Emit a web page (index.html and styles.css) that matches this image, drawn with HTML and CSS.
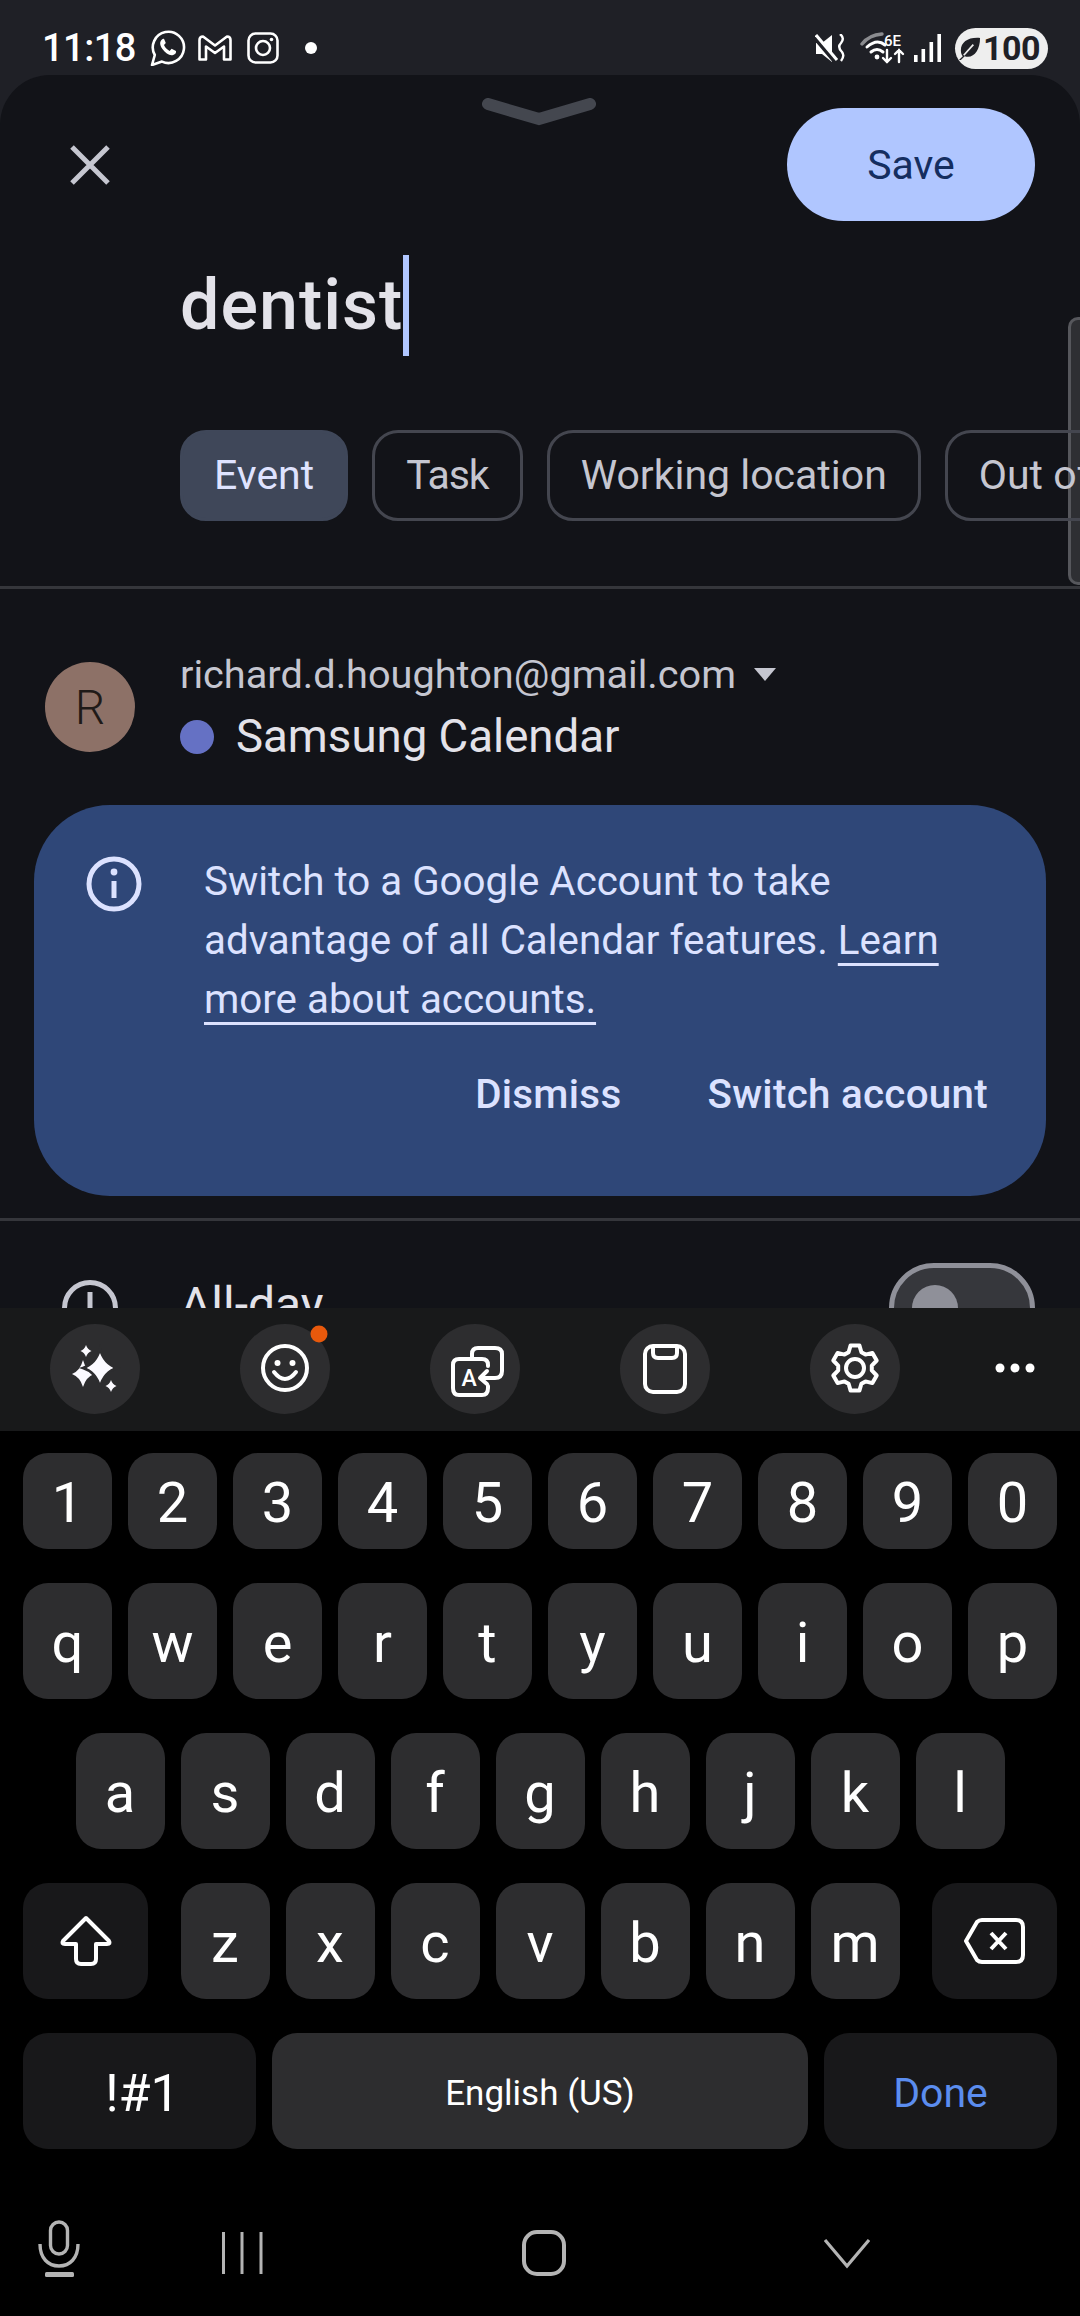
FILE: index.html
```html
<!DOCTYPE html>
<html lang="en">
<head>
	<meta charset="UTF-8">
	<title>New event</title>
	<link rel="stylesheet" href="styles.css">
</head>
<body>
	<div class="phone">
		<!-- status bar -->
		<div class="status">
			<span class="time">11:18</span>
			<svg class="st_whatsapp" viewBox="0 0 36 36" fill="none" stroke="#fff" stroke-width="2.6" stroke-linejoin="round"><path d="M2 35 L4.8 25 A15.6 15.6 0 1 1 12 31.6 Z"/><path fill="#fff" stroke="none" d="M12 9.5 c-2.4 1.8 -2.6 5.2 .4 9.6 c3.2 4.6 7.4 6.8 10.8 5.8 c2.2 -.7 3.2 -2.2 2.8 -4 l-4.4 -2.2 -2 2.2 c-2.4 -1 -4.4 -3 -5.6 -5.8 l1.8 -2 -1.6 -3.8 c-.6 -.6 -1.4 -.6 -2.2 .2z"/></svg>
			<svg class="st_gmail" viewBox="0 0 34 26" fill="none" stroke="#fff" stroke-width="2.6" stroke-linejoin="round"><path d="M1.5 5 Q1.5 1.5 5 1.5 L17 10.5 L29 1.5 Q32.5 1.5 32.5 5 V24.5 H26 V11.5 L17 18 L8 11.5 V24.5 H1.5 Z"/></svg>
			<svg class="st_insta" viewBox="0 0 32 32" fill="none" stroke="#fff" stroke-width="2.6"><rect x="1.5" y="1.5" width="29" height="29" rx="7"/><circle cx="16" cy="16" r="7"/><circle cx="24.5" cy="7.5" r="1.8" fill="#fff" stroke="none"/></svg>
			<span class="st_dot"></span>
			<div class="status_right">
				<svg class="st_mute" viewBox="0 0 30 28" fill="none"><path fill="#fff" d="M1 9 H7 L17 1 V28 L7 20 H1Z"/><path stroke="#1f2026" stroke-width="4" d="M-1 3 L21 29"/><path stroke="#fff" stroke-width="3" d="M1 1 L22 26"/><path stroke="#fff" stroke-width="2.4" d="M25 0 Q30 4 26 9 Q22 13 27 18 Q30 22 26 27"/></svg>
				<svg class="st_wifi" viewBox="0 0 46 33" fill="none" stroke="#fff" stroke-linecap="round"><path stroke="#8a8b8f" stroke-width="3.4" d="M2 12 Q9 3 22 2"/><path stroke-width="3" d="M7 15 Q17 6 25 13"/><path stroke-width="3" d="M11 20 Q17 15 23 20"/><circle cx="17" cy="25" r="2.4" fill="#fff" stroke="none"/><text class="st_6e" x="24" y="14">6E</text><path stroke-width="2.4" d="M27 18 V30 M23 26 L27 30 L31 26"/><path stroke-width="2.4" d="M39 30 V18 M35 22 L39 18 L43 22"/></svg>
				<svg class="st_signal" viewBox="0 0 27 28" fill="#fff"><rect x="0" y="21" width="3.6" height="7"/><rect x="7.5" y="15" width="3.6" height="13"/><rect x="15.5" y="8" width="3.6" height="20"/><rect x="23.4" y="0" width="3.6" height="28"/></svg>
				<div class="battery">
					<svg class="leaf" viewBox="0 0 24 24"><path fill="#1f2026" d="M23 1 C11 0 3 5 3 14 C3 17 4 19 5 20 L1 24 L3 24 L7 20 C16 23 23 14 23 1Z"/><path fill="none" stroke="#eee" stroke-width="1.8" d="M6 19 L16 8"/></svg>
					<span>100</span>
				</div>
			</div>
		</div>

		<!-- event sheet -->
		<div class="sheet">
			<svg class="handle" viewBox="0 0 114 28" fill="none"><path stroke="#44474f" stroke-width="12" stroke-linecap="round" d="M6 6 L57 21 L108 6"/></svg>
			<div class="sheet_head">
				<svg class="close" viewBox="0 0 40 40" fill="none"><path stroke="#c5c6d0" stroke-width="5" d="M2 2 L38 38 M38 2 L2 38"/></svg>
				<a class="save">Save</a>
			</div>
			<div class="title_row"><span class="title">dentist</span><span class="caret"></span></div>
			<div class="chips">
				<span class="chip chip_on">Event</span>
				<span class="chip chip_task">Task</span>
				<span class="chip">Working location</span>
				<span class="chip">Out of office</span>
			</div>
			<div class="scroll_edge"></div>
			<div class="line"></div>
			<div class="account">
				<div class="avatar">R</div>
				<div class="account_text">
					<div class="email">richard.d.houghton@gmail.com<span class="tri"></span></div>
					<div class="cal"><span class="cal_dot"></span>Samsung Calendar</div>
				</div>
			</div>
			<div class="banner">
				<div class="banner_top">
					<svg class="info" viewBox="0 0 56 56" fill="none" stroke="#dce2ff" stroke-width="5"><circle cx="28" cy="28" r="25"/><path d="M28 25 V42"/><circle cx="28" cy="16" r="3.4" fill="#dce2ff" stroke="none"/></svg>
					<p class="banner_text">Switch to a Google Account to take<br>advantage of all Calendar features. <u>Learn<br>more about accounts.</u></p>
				</div>
				<div class="banner_btns"><span>Dismiss</span><span>Switch account</span></div>
			</div>
			<div class="line line_b"></div>
			<div class="allday">
				<svg class="clock" viewBox="0 0 56 56" fill="none" stroke="#c5c6d0" stroke-width="5"><circle cx="28" cy="28" r="25.5"/><path d="M28 12 V30"/></svg>
				<span class="allday_text">All-day</span>
				<div class="switch"><span class="thumb"></span></div>
			</div>
		</div>

		<!-- keyboard -->
		<div class="keyboard">
			<div class="tools">
				<span class="tool"><svg viewBox="0 0 90 90" fill="#fbfaff"><path d="M33 36 Q36 47 44 50 Q36 53 33 63 Q30 53 22 50 Q30 47 33 36Z"/><path stroke="#2d2d2f" stroke-width="2.5" d="M50 25 Q54 40 67 44 Q54 48 50 63 Q46 48 33 44 Q46 40 50 25Z"/><path d="M36 21 Q37.5 25.5 41.5 27 Q37.5 28.5 36 33 Q34.5 28.5 30.5 27 Q34.5 25.5 36 21Z"/><path d="M61 56 Q62.5 60.5 66.5 62 Q62.5 63.5 61 68 Q59.5 63.5 55.5 62 Q59.5 60.5 61 56Z"/></svg></span>
				<span class="tool"><svg viewBox="0 0 90 90" fill="none" stroke="#fff" stroke-width="4"><circle cx="45" cy="44" r="22"/><circle cx="37.5" cy="39" r="3" fill="#fff" stroke="none"/><circle cx="52.5" cy="39" r="3" fill="#fff" stroke="none"/><path stroke-linecap="round" d="M34 48 Q45 62 56 48"/><circle cx="79" cy="10" r="8.5" fill="#e8590c" stroke="none"/></svg></span>
				<span class="tool"><svg viewBox="0 0 90 90" fill="none" stroke="#fff" stroke-width="4" stroke-linecap="round" stroke-linejoin="round"><path d="M42 34 V30 Q42 24 48 24 H65 Q72 24 72 30 V47 Q72 54 65 54 H52"/><path d="M57 47 L50 54 L57 60"/><path d="M58 42 V41 Q58 35 52 35 H29 Q23 35 23 41 V64 Q23 71 29 71 H52 Q58 71 58 64 V62"/><text class="tool_a" x="31.5" y="62">A</text></svg></span>
				<span class="tool"><svg viewBox="0 0 90 90" fill="none" stroke="#fff" stroke-width="4"><rect x="25" y="22" width="40" height="46" rx="8"/><path d="M33 22 V29 Q33 34 38 34 H52 Q57 34 57 29 V22"/></svg></span>
				<span class="tool"><svg viewBox="0 0 90 90" fill="none" stroke="#fff" stroke-width="4" stroke-linejoin="round"><path d="M40.6 21.4 L49.4 21.4 L51.4 28.2 L55.5 30.6 L62.4 28.9 L66.7 36.5 L61.8 41.6 L61.8 46.4 L66.7 51.5 L62.4 59.1 L55.5 57.4 L51.4 59.8 L49.4 66.6 L40.6 66.6 L38.6 59.8 L34.5 57.4 L27.6 59.1 L23.3 51.5 L28.2 46.4 L28.2 41.6 L23.3 36.5 L27.6 28.9 L34.5 30.6 L38.6 28.2 Z"/><circle cx="45" cy="44" r="9"/></svg></span>
				<svg class="more" viewBox="0 0 40 10" fill="#fff"><circle cx="5" cy="5" r="4.5"/><circle cx="20" cy="5" r="4.5"/><circle cx="35" cy="5" r="4.5"/></svg>
			</div>
			<div class="keys">
				<div class="row row_num">
					<span class="key">1</span><span class="key">2</span><span class="key">3</span><span class="key">4</span><span class="key">5</span><span class="key">6</span><span class="key">7</span><span class="key">8</span><span class="key">9</span><span class="key">0</span>
				</div>
				<div class="row">
					<span class="key">q</span><span class="key">w</span><span class="key">e</span><span class="key">r</span><span class="key">t</span><span class="key">y</span><span class="key">u</span><span class="key">i</span><span class="key">o</span><span class="key">p</span>
				</div>
				<div class="row row_mid">
					<span class="key">a</span><span class="key">s</span><span class="key">d</span><span class="key">f</span><span class="key">g</span><span class="key">h</span><span class="key">j</span><span class="key">k</span><span class="key">l</span>
				</div>
				<div class="row">
					<span class="key key_fn"><svg viewBox="0 0 125 116" fill="none"><path stroke="#fff" stroke-width="4" stroke-linejoin="round" d="M63 35 L40 58 Q38 61 42 61 H53 V76 Q53 81 58 81 H68 Q73 81 73 76 V61 H84 Q88 61 86 58 Z"/></svg></span>
					<div class="letters">
						<span class="key">z</span><span class="key">x</span><span class="key">c</span><span class="key">v</span><span class="key">b</span><span class="key">n</span><span class="key">m</span>
					</div>
					<span class="key key_fn"><svg viewBox="0 0 125 116" fill="none" stroke="#fff" stroke-width="4" stroke-linejoin="round"><path d="M34 58 L45 39 Q47 37 50 37 H84 Q91 37 91 44 V72 Q91 79 84 79 H50 Q47 79 45 77 Z"/><path d="M59 50 L74 66 M74 50 L59 66"/></svg></span>
				</div>
				<div class="row">
					<span class="key key_wide key_sym">!#1</span>
					<span class="key key_space">English (US)</span>
					<span class="key key_wide key_done">Done</span>
				</div>
			</div>
			<div class="nav">
				<svg class="nav_mic" viewBox="0 0 42 60" fill="none" stroke="#b4b4b4" stroke-width="3.4"><rect x="12.5" y="2" width="17" height="32" rx="8.5"/><path d="M2 24 C2 38 10 46 21 46 C32 46 40 38 40 24"/><rect x="7" y="52" width="29" height="5" rx="1.5" fill="#b4b4b4" stroke="none"/></svg>
				<svg class="nav_recent" viewBox="0 0 42 60" fill="none" stroke="#b4b4b4" stroke-width="3"><path d="M1.5 12 V54 M20 12 V54 M39 12 V54"/></svg>
				<svg class="nav_home" viewBox="0 0 46 60" fill="none" stroke="#b4b4b4" stroke-width="4"><rect x="3" y="12" width="40" height="42" rx="13"/></svg>
				<svg class="nav_back" viewBox="0 0 46 60" fill="none" stroke="#b4b4b4" stroke-width="3.2"><path d="M1 20 L23 46 L45 20"/></svg>
			</div>
		</div>
	</div>
</body>
</html>
```

FILE: styles.css
```css
*{
	margin: 0;
	padding: 0;
	box-sizing: border-box;
}
body{
	background: #000;
	font-family: Roboto, "Noto Sans", sans-serif;
}
svg{
	display: block;
	flex: none;
}
.phone{
	width: 1080px;
	height: 2316px;
	display: flex;
	flex-direction: column;
	overflow: hidden;
	background: #1f2026;
}

/* status bar */
.status{
	height: 75px;
	flex: none;
	padding: 21px 32px 0 42px;
	display: flex;
	align-items: center;
	color: #fff;
}
.time{
	font-size: 38px;
	font-weight: 500;
	letter-spacing: -0.5px;
	width: 89px;
	margin-right: 19px;
}
.st_whatsapp{
	width: 36px;
	height: 36px;
	margin-right: 12px;
}
.st_gmail{
	width: 34px;
	height: 26px;
	margin-right: 15px;
}
.st_insta{
	width: 32px;
	height: 32px;
	margin-right: 26px;
}
.st_dot{
	width: 12px;
	height: 12px;
	border-radius: 50%;
	background: #fff;
}
.status_right{
	margin-left: auto;
	display: flex;
	align-items: center;
}
.st_mute{
	width: 30px;
	height: 28px;
	margin-right: 15px;
}
.st_wifi{
	width: 46px;
	height: 33px;
	margin-right: 8px;
}
.st_6e{
	font-size: 15px;
	font-weight: 500;
	fill: #fff;
	stroke: none;
}
.st_signal{
	width: 27px;
	height: 28px;
	margin-right: 14px;
}
.battery{
	width: 93px;
	height: 41px;
	border-radius: 21px;
	background: #eee;
	display: flex;
	align-items: center;
	padding-left: 3px;
	color: #1f2026;
	font-size: 34px;
	font-weight: 700;
	letter-spacing: -0.5px;
}
.leaf{
	width: 23px;
	height: 23px;
	margin-right: 2px;
}

/* sheet */
.sheet{
	flex: 1;
	position: relative;
	overflow: hidden;
	background: #121318;
	border-radius: 50px 50px 0 0;
}
.handle{
	position: absolute;
	left: 482px;
	top: 23px;
	width: 114px;
	height: 28px;
}
.sheet_head{
	padding: 33px 45px 0 70px;
	display: flex;
	align-items: center;
	justify-content: space-between;
}
.close{
	width: 40px;
	height: 40px;
}
.save{
	width: 248px;
	height: 113px;
	border-radius: 57px;
	background: #b0c6ff;
	color: #152e60;
	font-size: 41px;
	display: flex;
	align-items: center;
	justify-content: center;
}
.title_row{
	margin-top: 34px;
	padding-left: 180px;
	height: 101px;
	display: flex;
}
.title{
	font-size: 70px;
	line-height: 101px;
	font-weight: 500;
	letter-spacing: 1px;
	color: #e3e2e9;
}
.caret{
	width: 6px;
	height: 101px;
	background: #b0c6ff;
}
.chips{
	position: relative;
	z-index: 1;
	margin-top: 74px;
	padding-left: 180px;
	display: flex;
	gap: 24px;
	overflow: hidden;
}
.chip{
	flex: none;
	height: 91px;
	padding: 0 31px;
	border: 3px solid #44464f;
	border-radius: 26px;
	color: #c5c6d0;
	font-size: 41px;
	line-height: 85px;
	white-space: nowrap;
}
.chip_on{
	background: #3f4759;
	border-color: #3f4759;
	color: #dfe3ff;
}
.chip_task{
	letter-spacing: -1px;
}
.scroll_edge{
	position: absolute;
	right: 0;
	top: 242px;
	width: 12px;
	height: 268px;
	background: #2e2f33;
	border: 3px solid #56575c;
	border-right: 0;
	border-radius: 10px 0 0 10px;
}
.line{
	margin-top: 65px;
	height: 3px;
	background: #35363b;
}
.account{
	margin-top: 57px;
	padding-left: 45px;
	display: flex;
	align-items: flex-start;
	gap: 45px;
}
.avatar{
	width: 90px;
	height: 90px;
	margin-top: 16px;
	border-radius: 50%;
	background: #8d7167;
	color: #1f1a18;
	font-size: 48px;
	font-weight: 300;
	display: flex;
	align-items: center;
	justify-content: center;
}
.email{
	color: #c5c6d0;
	font-size: 39.7px;
	line-height: 57px;
	display: flex;
	align-items: center;
}
.tri{
	margin-left: 18px;
	border-left: 11.5px solid transparent;
	border-right: 11.5px solid transparent;
	border-top: 13px solid #c5c6d0;
}
.cal{
	color: #e3e2e9;
	font-size: 45.6px;
	line-height: 68px;
	display: flex;
	align-items: center;
}
.cal_dot{
	width: 34px;
	height: 34px;
	border-radius: 50%;
	background: #6571c4;
	margin-right: 22px;
}
.banner{
	margin: 34px 34px 0;
	height: 391px;
	border-radius: 76px;
	background: #2f4778;
	color: #dce2ff;
	padding: 47px 58px 0 52px;
	font-size: 40.3px;
	line-height: 59px;
}
.banner_top{
	display: flex;
	align-items: flex-start;
	gap: 62px;
}
.info{
	width: 56px;
	height: 56px;
	margin-top: 4px;
}
.banner_text{
	white-space: nowrap;
}
.banner_text u{
	text-underline-offset: 9px;
	text-decoration-thickness: 3px;
}
.banner_btns{
	margin-top: 36px;
	display: flex;
	justify-content: flex-end;
	gap: 86px;
	font-weight: 500;
	letter-spacing: 0.3px;
}
.line_b{
	margin-top: 22px;
}
.allday{
	margin-top: 42px;
	padding: 0 45px 0 62px;
	height: 90px;
	display: flex;
	align-items: center;
}
.clock{
	width: 56px;
	height: 56px;
	margin-right: 62px;
}
.allday_text{
	color: #e3e2e9;
	font-size: 48px;
	margin-bottom: 8px;
}
.switch{
	margin-left: auto;
	width: 146px;
	height: 90px;
	border-radius: 45px;
	background: #36373c;
	border: 5px solid #8f9099;
	padding: 17px 0 0 18px;
}
.thumb{
	display: block;
	width: 46px;
	height: 46px;
	border-radius: 50%;
	background: #8f9099;
}

/* keyboard */
.keyboard{
	flex: none;
	height: 1008px;
	background: #000;
}
.tools{
	height: 123px;
	background: #18191a;
	padding: 16px 0 0 50px;
	display: flex;
	gap: 100px;
}
.tool{
	width: 90px;
	height: 90px;
	border-radius: 50%;
	background: #2d2d2f;
}
.tool_a{
	font-size: 23px;
	font-weight: 500;
	fill: #fff;
	stroke: none;
}
.more{
	width: 40px;
	height: 10px;
	margin: 39px 0 0 -5px;
}
.keys{
	padding: 22px 23px 0;
	display: flex;
	flex-direction: column;
	gap: 34px;
}
.row{
	display: flex;
	justify-content: space-between;
	height: 116px;
}
.row_num{
	height: 96px;
}
.row_mid{
	justify-content: center;
	gap: 16px;
}
.letters{
	display: flex;
	gap: 16px;
}
.key{
	width: 89px;
	border-radius: 25px;
	background: #2d2d2f;
	color: #fff;
	font-size: 56px;
	display: flex;
	align-items: center;
	justify-content: center;
	padding-top: 4px;
}
.key_fn{
	width: 125px;
	background: #18181a;
	padding: 0;
}
.key_wide{
	width: 233px;
	background: #18181a;
}
.key_sym{
	font-size: 52px;
	padding-left: 6px;
}
.key_space{
	width: 536px;
	font-size: 35px;
}
.key_done{
	font-size: 41px;
	color: #5b8def;
}
.nav{
	margin-top: 71px;
	padding-left: 38px;
	display: flex;
	gap: 257px;
}
.nav svg{
	height: 60px;
}
.nav_mic{
	width: 42px;
	margin-right: -115px;
}
.nav_recent{
	width: 42px;
}
.nav_home{
	width: 46px;
}
.nav_back{
	width: 46px;
}
```
